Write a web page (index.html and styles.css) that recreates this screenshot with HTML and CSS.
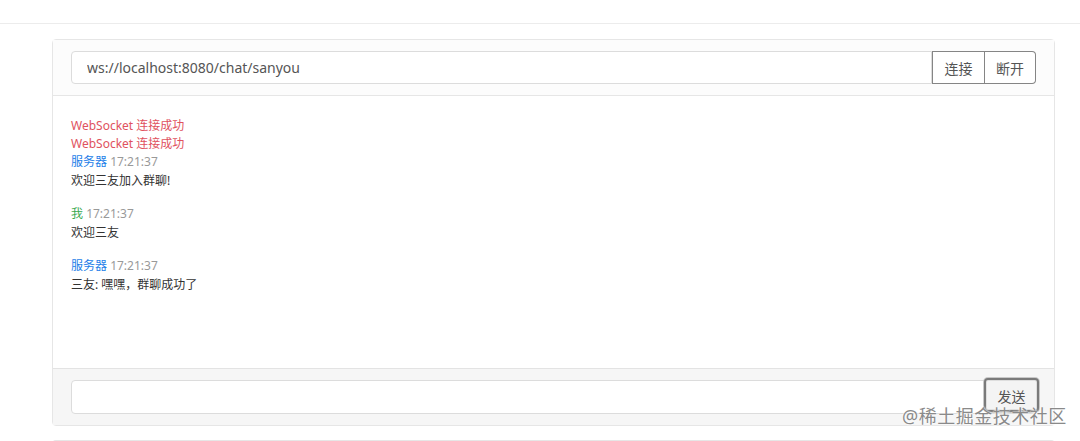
FILE: index.html
```html
<!DOCTYPE html>
<html lang="zh">
<head>
    <meta charset="UTF-8">
    <meta name="viewport" content="width=device-width, initial-scale=1.0">
    <title>群聊</title>
    <link rel="stylesheet" href="styles.css">
</head>
<body>
    <div class="topbar"></div>

    <div class="container">
        <div class="card">
            <div class="card-header">
                <div class="input-group">
                    <input type="text" class="url-input" value="ws://localhost:8080/chat/sanyou">
                    <button class="btn btn-left">连接</button>
                    <button class="btn btn-right">断开</button>
                </div>
            </div>

            <div class="card-body">
                <div class="sys">WebSocket 连接成功</div>
                <div class="sys">WebSocket 连接成功</div>
                <div class="msg">
                    <div><span class="from server">服务器</span> <span class="time">17:21:37</span></div>
                    <div class="text">欢迎三友加入群聊!</div>
                </div>
                <div class="msg">
                    <div><span class="from me">我</span> <span class="time">17:21:37</span></div>
                    <div class="text">欢迎三友</div>
                </div>
                <div class="msg">
                    <div><span class="from server">服务器</span> <span class="time">17:21:37</span></div>
                    <div class="text">三友: 嘿嘿，群聊成功了</div>
                </div>
            </div>

            <div class="card-footer">
                <div class="input-group">
                    <input type="text" class="send-input">
                    <button class="btn btn-send">发送</button>
                </div>
            </div>
        </div>

        <div class="card card-next"></div>
    </div>

    <div class="watermark">@稀土掘金技术社区</div>
</body>
</html>
```

FILE: styles.css
```css
body {
    margin: 0;
    font-family: "Noto Sans", "Noto Sans CJK SC", sans-serif;
    font-size: 12px;
    color: #333;
    background-color: #fff;
    overflow: hidden;
}
.topbar {
    height: 23px;
    border-bottom: 1px solid #ececec;
}
.container {
    padding: 15px 25px 0 52px;
}
.card {
    border: 1px solid #e6e6e6;
    border-radius: 4px;
    background-color: #fff;
}
.card-header {
    background-color: #fcfcfc;
    padding: 11px 18px;
    border-bottom: 1px solid #e6e6e6;
}
.card-footer {
    background-color: #f6f6f6;
    padding: 11px 17px 11px 18px;
    border-top: 1px solid #e3e3e3;
}
.input-group {
    display: flex;
}
input {
    flex: 1;
    height: 33px;
    box-sizing: border-box;
    border: 1px solid #dcdcdc;
    border-radius: 4px;
    background-color: #fff;
    font-family: inherit;
    outline: none;
}
.url-input {
    padding: 0 15px;
    font-size: 14px;
    color: #555;
    border-top-right-radius: 0;
    border-bottom-right-radius: 0;
}
.btn {
    height: 33px;
    padding: 0 8px;
    background-color: #fff;
    border: 1px solid #858585;
    color: #555;
    font-family: inherit;
    font-size: 14px;
    cursor: pointer;
}
.btn-left {
    border-radius: 0;
    width: 53px;
}
.btn-right {
    border-left: none;
    border-radius: 0 4px 4px 0;
    width: 51px;
}
.card-body {
    height: 251px;
    padding: 21px 18px 0;
    line-height: 18px;
}
.sys {
    color: #e0525e;
}
.msg {
    margin-bottom: 15px;
}
.msg .text {
    margin-top: 1px;
}
.from.server {
    color: #1e7ee8;
}
.from.me {
    color: #3aa94f;
}
.time {
    color: #999;
}
.send-input {
    height: 34px;
    padding: 0 12px;
}
.btn-send {
    width: 55px;
    height: 34px;
    margin: -2px -2px 0 -54px;
    position: relative;
    border: 2px solid #7a7a7a;
    border-radius: 4px;
    box-shadow: 0 0 0 1px #c8c8c8, inset 0 0 0 1px #dedede;
    background-color: #f4f4f4;
    padding: 2px 0 0;
}
.card-next {
    margin-top: 14px;
    height: 20px;
    border-bottom: none;
}
.watermark {
    position: absolute;
    left: 902px;
    top: 402px;
    font-size: 18px;
    color: #8a8a8a;
    text-shadow: 0 0 2px #fff, 0 0 2px #fff;
    letter-spacing: 0.5px;
}
```
